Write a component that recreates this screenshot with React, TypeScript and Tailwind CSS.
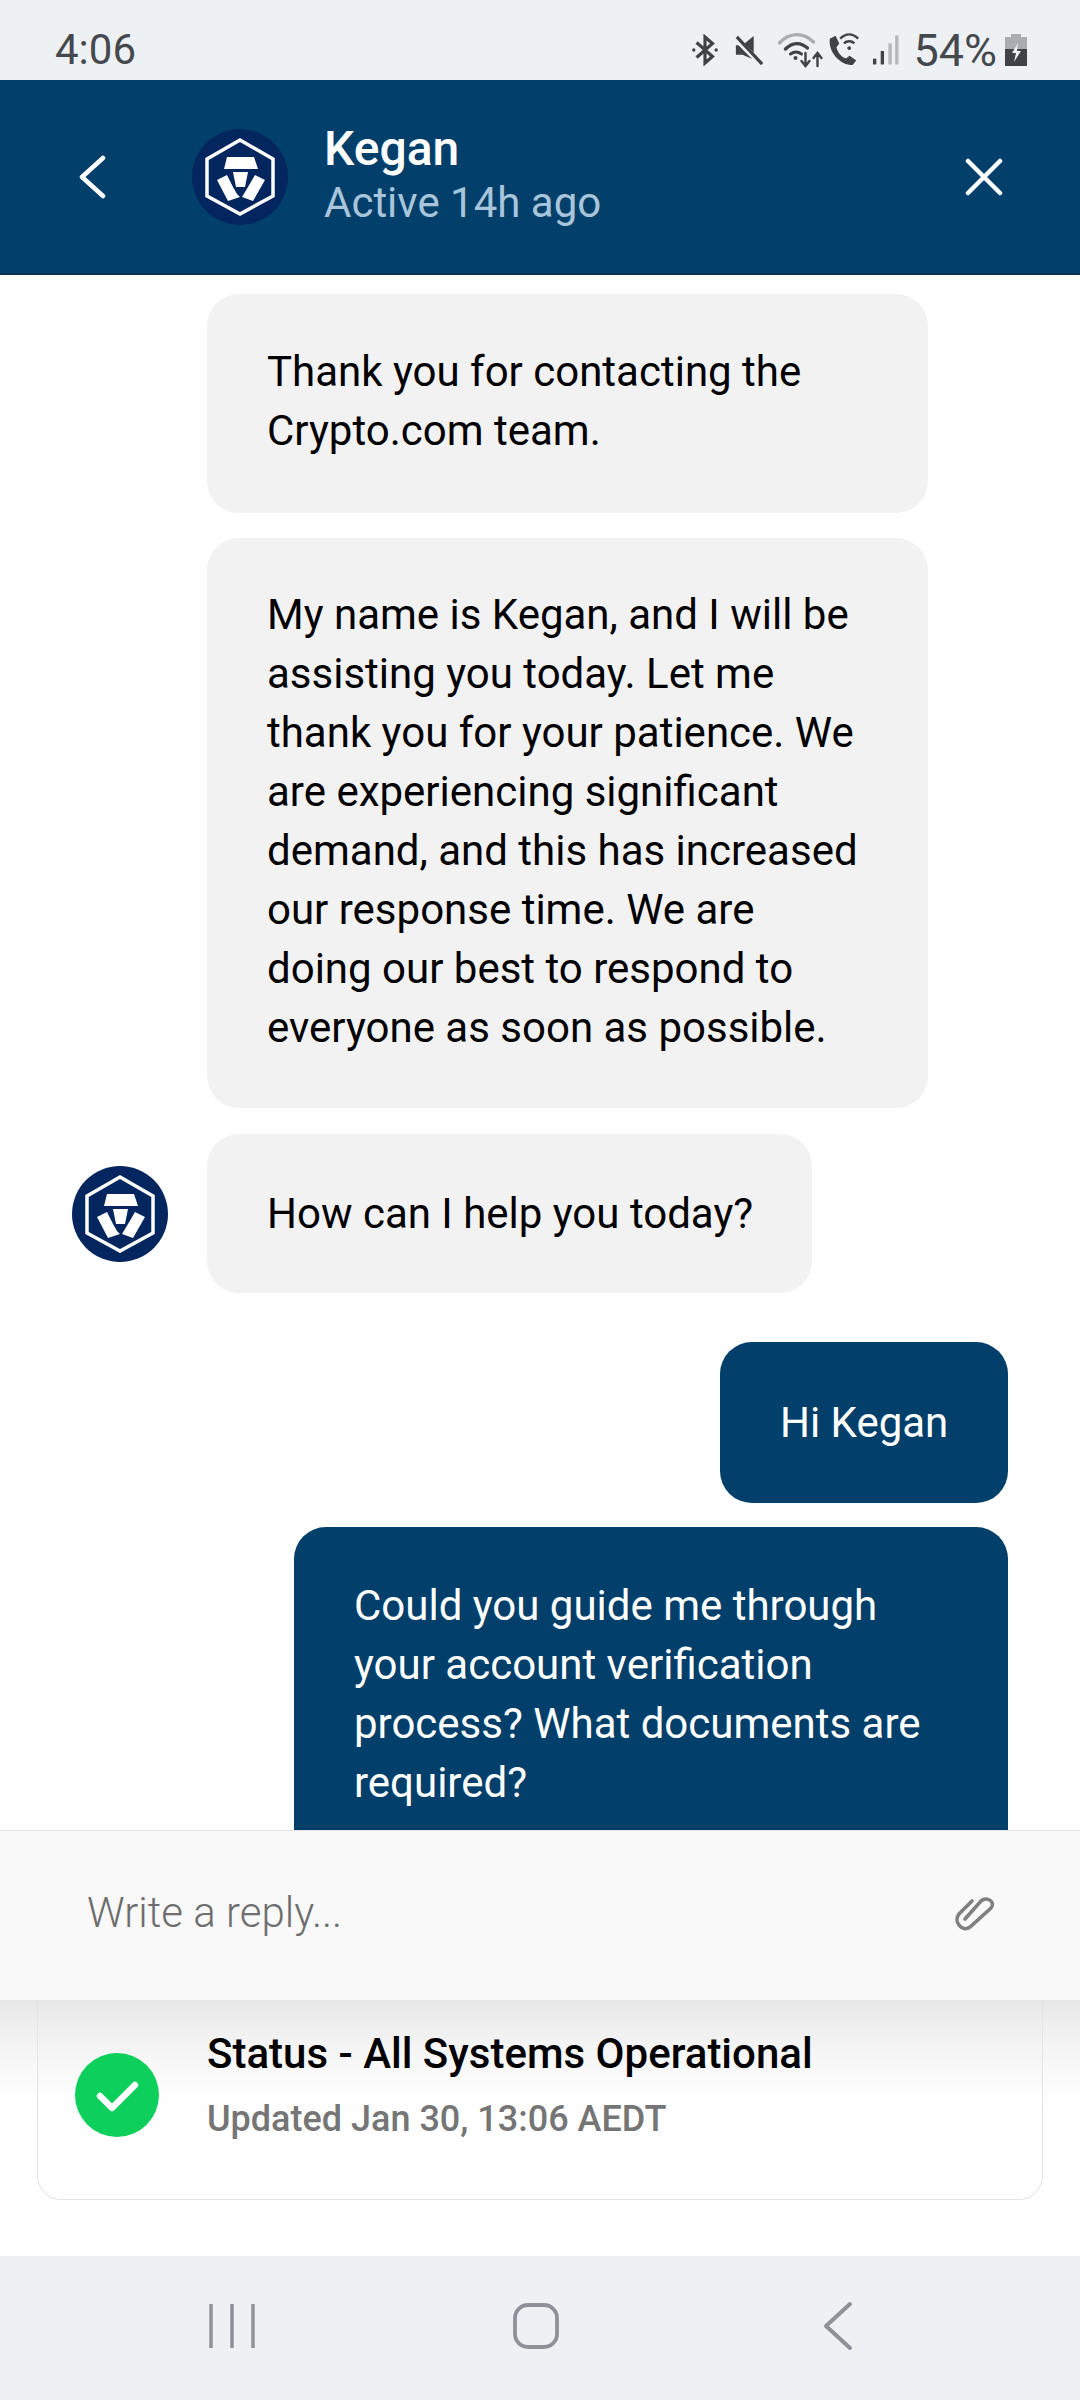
import React from "react";

const agentMessages = [
  {
    pad: "pt-[48px] pb-[53px]",
    lines: ["Thank you for contacting the", "Crypto.com team."],
  },
  {
    pad: "pt-[47px] pb-[51px]",
    lines: [
      "My name is Kegan, and I will be",
      "assisting you today. Let me",
      "thank you for your patience. We",
      "are experiencing significant",
      "demand, and this has increased",
      "our response time. We are",
      "doing our best to respond to",
      "everyone as soon as possible.",
    ],
  },
];

function Lines({ lines }: { lines: string[] }) {
  return (
    <>
      {lines.map((line) => (
        <div key={line} className="whitespace-nowrap">
          {line}
        </div>
      ))}
    </>
  );
}

function CroLogo() {
  return (
    <svg viewBox="0 0 96 96" className="w-[96px] h-[96px] shrink-0">
      <circle cx="48" cy="48" r="48" fill="#03265e" />
      <path d="M48 11 L81 30 V67 L48 85 L15 67 V30 Z" fill="none" stroke="#fff" strokeWidth="3.5" />
      <path d="M35 28 H62 L66 40 H32 Z" fill="#fff" />
      <path d="M41 43 H56 L53 58 H44 Z" fill="#fff" />
      <path d="M25 51 L35 46 L41 58 L45 65 L48 68 L36 72 Z" fill="#fff" />
      <path d="M73 51 L63 46 L56 58 L53 63 L50 68 L61 72 Z" fill="#fff" />
    </svg>
  );
}

function StatusIcons() {
  return (
    <div className="flex items-center text-[#3f4347]">
      {/* bluetooth */}
      <svg viewBox="0 0 30 34" className="w-[28px] h-[32px]" fill="none" stroke="currentColor" strokeWidth="3.4">
        <path d="M6 9 L23 24 L15 31 V3 L23 10 L6 25" />
        <circle cx="3" cy="17" r="1.8" fill="currentColor" stroke="none" />
        <circle cx="27" cy="17" r="1.8" fill="currentColor" stroke="none" />
      </svg>
      {/* muted */}
      <svg viewBox="0 0 32 34" className="w-[30px] h-[32px] ml-[15px]" fill="currentColor">
        <path d="M2 12 H9 L21 2 V27 L9 22 H2 Z" />
        <path d="M1 4 L30 33" stroke="#eef1f4" strokeWidth="6" />
        <path d="M3 3 L30 32" stroke="currentColor" strokeWidth="3.4" />
      </svg>
      {/* wifi with arrows */}
      <svg viewBox="0 0 46 36" className="w-[47px] h-[36px] ml-[13px]" fill="none" strokeLinecap="round">
        <path d="M2 11 C12 0 26 0 36 10" stroke="#a9adb1" strokeWidth="3.4" />
        <path d="M8 17 C15 10 23 10 30 16" stroke="#3f4347" strokeWidth="3.4" />
        <path d="M13 22 C17 19 20 19 24 22" stroke="#3f4347" strokeWidth="3" />
        <circle cx="18" cy="26" r="2" fill="#3f4347" />
        <path d="M28 21 V33 M24 29 L28 34 L32 29 M40 34 V22 M36 26 L40 21 L44 26" stroke="#3f4347" strokeWidth="2.4" />
      </svg>
      {/* wifi calling */}
      <svg viewBox="0 0 36 36" className="w-[34px] h-[34px] ml-[3px]" fill="none">
        <path
          d="M3 6 L9 3 L13 11 L10 15 C11 20 15 25 20 27 L24 24 L31 29 L27 34 C14 34 1 20 3 6 Z"
          fill="#3f4347"
        />
        <path d="M14 6 C20 0 27 0 33 6" stroke="#3f4347" strokeWidth="2.6" />
        <path d="M18 11 C21 8 26 8 29 11" stroke="#3f4347" strokeWidth="2.6" />
        <circle cx="23.5" cy="16" r="2" fill="#3f4347" />
      </svg>
      {/* signal */}
      <svg viewBox="0 0 28 30" className="w-[27px] h-[30px] ml-[11px]">
        <rect x="1" y="24" width="3.5" height="6" fill="#3f4347" />
        <rect x="9" y="16" width="3.5" height="14" fill="#3f4347" />
        <rect x="17" y="8" width="3.5" height="22" fill="#b4b8bc" />
        <rect x="24" y="0" width="3.5" height="30" fill="#b4b8bc" />
      </svg>
      <span className="text-[45px] leading-none ml-[14px] text-[#45494d]">54%</span>
      {/* battery charging */}
      <svg viewBox="0 0 22 32" className="w-[22px] h-[32px] ml-[8px]">
        <rect x="6" y="0" width="10" height="4" fill="#a9adb1" />
        <rect x="0" y="3" width="22" height="13" fill="#a9adb1" />
        <rect x="0" y="15" width="22" height="17" fill="#3f4347" />
        <path d="M13 9 L7 19 H11 L9 28 L16 17 H12 Z" fill="#eef1f4" />
      </svg>
    </div>
  );
}

export default function App() {
  return (
    <div
      className="w-[1080px] h-[2400px] flex flex-col bg-white overflow-hidden text-black"
      style={{ fontFamily: "Roboto, sans-serif" }}
    >
      {/* phone status bar */}
      <div className="h-[80px] shrink-0 bg-[#eef1f4] flex items-center justify-between pl-[55px] pr-[53px] pt-[20px]">
        <span className="text-[42px] leading-none text-[#45494d]">4:06</span>
        <StatusIcons />
      </div>

      {/* header */}
      <div className="h-[195px] shrink-0 bg-[#023f6a] border-b-2 border-[#0a3050] flex items-center pl-[78px] pr-[77px]">
        <svg viewBox="0 0 28 44" className="w-[28px] h-[44px]" fill="none" stroke="#fff" strokeWidth="4.5" strokeLinecap="round" strokeLinejoin="round">
          <path d="M25 3 L4 22 L25 41" />
        </svg>
        <div className="ml-[86px]">
          <CroLogo />
        </div>
        <div className="ml-[36px] flex-1 mt-[-1px]">
          <div className="text-[48px] leading-[54px] font-medium text-white">Kegan</div>
          <div className="text-[42px] leading-[54px] text-[#a8c5db]">Active 14h ago</div>
        </div>
        <svg viewBox="0 0 38 38" className="w-[38px] h-[38px]" fill="none" stroke="#fff" strokeWidth="4.5" strokeLinecap="round">
          <path d="M3 3 L35 35 M35 3 L3 35" />
        </svg>
      </div>

      {/* conversation */}
      <div className="h-[1556px] shrink-0 overflow-hidden pt-[19px] flex flex-col text-[42px] leading-[59px]">
        <div className="flex flex-col gap-[25px] pl-[207px]">
          {agentMessages.map((msg) => (
            <div key={msg.lines[0]} className={`w-[721px] bg-[#f2f2f3] rounded-[32px] pl-[60px] ${msg.pad}`}>
              <Lines lines={msg.lines} />
            </div>
          ))}
        </div>
        <div className="flex items-center gap-[39px] pl-[72px] mt-[26px]">
          <CroLogo />
          <div className="w-[605px] bg-[#f2f2f3] rounded-[32px] pl-[60px] py-[50px] whitespace-nowrap">How can I help you today?</div>
        </div>
        <div className="flex flex-col items-end gap-[24px] pr-[72px] mt-[49px] text-white">
          <div className="w-[288px] bg-[#023f6a] rounded-[32px] pl-[60px] py-[51px] whitespace-nowrap">Hi Kegan</div>
          <div className="w-[714px] bg-[#023f6a] rounded-[32px] pl-[60px] py-[49px]">
            <Lines
              lines={[
                "Could you guide me through",
                "your account verification",
                "process? What documents are",
                "required?",
              ]}
            />
          </div>
        </div>
      </div>

      {/* reply box */}
      <div className="h-[170px] shrink-0 bg-[#f9f9f9] border-t border-[#e6e6e6] flex items-center justify-between pl-[87px] pr-[83px] mt-[-1px]">
        <span className="text-[42px] font-light text-[#6e6e6e] mt-[-6px]">Write a reply...</span>
        <svg viewBox="0 0 44 44" className="w-[44px] h-[44px] mt-[6px]" fill="none" stroke="#808080" strokeWidth="3.6" strokeLinecap="round">
          <path d="M19 4 L6 17 C0 24 9 36 17 30 L38 11 C43 5 34 -1 28 4 L12 22" />
        </svg>
      </div>

      {/* status card, under the reply box's shadow */}
      <div className="flex-1 px-[37px] bg-[linear-gradient(to_bottom,#e8e8e8,#f5f5f5_50px,#fefefe_100px,#ffffff_120px)]">
        <div className="h-[200px] border border-t-0 border-[#e4e4e4] rounded-b-[24px] flex items-center pl-[37px] pb-[10px]">
          <div className="w-[84px] h-[84px] rounded-full bg-[#0ccf5c] flex items-center justify-center shrink-0">
            <svg viewBox="0 0 44 34" className="w-[44px] h-[34px]" fill="none" stroke="#fff" strokeWidth="6.5" strokeLinecap="round" strokeLinejoin="round">
              <path d="M5 18 L17 30 L40 7" />
            </svg>
          </div>
          <div className="ml-[48px] mt-[-17px]">
            <div className="text-[42px] leading-[50px] font-medium">Status - All Systems Operational</div>
            <div className="text-[36px] leading-[50px] mt-[15px] font-medium text-[#757575]">Updated Jan 30, 13:06 AEDT</div>
          </div>
        </div>
      </div>

      {/* nav bar */}
      <div className="h-[144px] shrink-0 bg-[#eef1f4] flex items-center justify-center gap-[258px] text-[#8c9298] pb-[4px] pr-[18px]">
        <svg viewBox="0 0 46 46" className="w-[46px] h-[46px]" stroke="currentColor" strokeWidth="3.5">
          <path d="M2 1 V45 M23 1 V45 M44 1 V45" />
        </svg>
        <svg viewBox="0 0 46 46" className="w-[46px] h-[46px]" fill="none" stroke="currentColor" strokeWidth="3.8">
          <rect x="2" y="2" width="42" height="42" rx="13" />
        </svg>
        <svg viewBox="0 0 30 50" className="w-[30px] h-[50px] ml-[6px]" fill="none" stroke="currentColor" strokeWidth="4" strokeLinecap="round" strokeLinejoin="round">
          <path d="M27 3 L3 25 L27 47" />
        </svg>
      </div>
    </div>
  );
}
